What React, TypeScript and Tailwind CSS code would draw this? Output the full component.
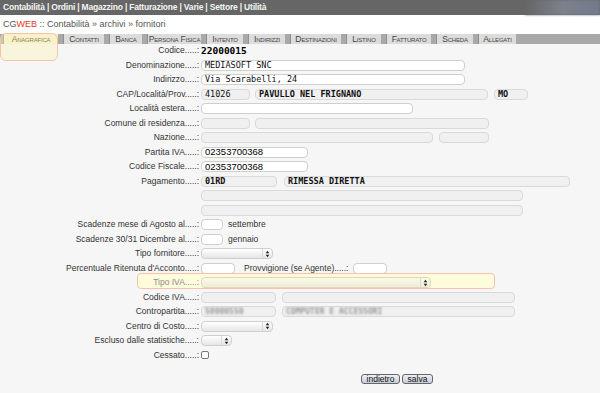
import type { ReactNode } from 'react';

const sans = "font-['Liberation_Sans',Arial,sans-serif]";
const mono = "font-['DejaVu_Sans_Mono',monospace]";

type Tab = { label: string; w: string; active?: boolean };

const tabs: Tab[] = [
  { label: 'Anagrafica', w: 'w-[55px]', active: true },
  { label: 'Contatti', w: 'w-[41px]' },
  { label: 'Banca', w: 'w-[33px]' },
  { label: 'Persona Fisica', w: 'w-[54px]' },
  { label: 'Intento', w: 'w-[37px]' },
  { label: 'Indirizzi', w: 'w-[37px]' },
  { label: 'Destinazioni', w: 'w-[51px]' },
  { label: 'Listino', w: 'w-[35px]' },
  { label: 'Fatturato', w: 'w-[45px]' },
  { label: 'Scheda', w: 'w-[37px]' },
  { label: 'Allegati', w: 'w-[38px]' },
];

function Row({
  label,
  children,
  muted,
}: {
  label: string;
  children?: ReactNode;
  muted?: boolean;
}) {
  return (
    <div className="flex h-[14.5px] items-center">
      <div
        className={`w-[199px] shrink-0 whitespace-nowrap text-right text-[8.5px] ${muted ? 'text-[#8a8a8a]' : 'text-[#333]'}`}
      >
        {label}
      </div>
      <div className="ml-[2px] flex items-center">{children}</div>
    </div>
  );
}

function Field({
  w,
  value,
  grey,
  bold,
  plain,
}: {
  w: string;
  value?: string;
  grey?: boolean;
  bold?: boolean;
  plain?: boolean;
}) {
  return (
    <div
      className={`${w} flex h-[11px] items-center overflow-hidden whitespace-nowrap rounded-[4px] border px-[3px] ${grey ? 'border-[#d9d9d9] bg-[#f0f0f0]' : 'border-[#cfcfcf] bg-white'} ${plain ? `${sans} text-[9.5px] text-black` : `${mono} text-[8.5px] text-[#111]`} ${bold ? 'font-bold' : ''}`}
    >
      {value}
    </div>
  );
}

function Arrows() {
  return (
    <svg width="5" height="8" viewBox="0 0 5 8">
      <path d="M2.5 0.8L4.3 3.2H0.7Z M2.5 7.2L4.3 4.8H0.7Z" fill="#222" />
    </svg>
  );
}

function Select({ w, tint }: { w: string; tint?: boolean }) {
  return (
    <div
      className={`${w} flex h-[11px] items-center justify-end rounded-[4px] border ${tint ? 'border-[#dcd8bc] bg-gradient-to-b from-[#fbfae9] to-[#efedd5]' : 'border-[#cfcfcf] bg-gradient-to-b from-white to-[#e6e6e6]'}`}
    >
      <div className="flex h-full w-[10px] items-center justify-center border-l border-[#dadada]">
        <Arrows />
      </div>
    </div>
  );
}

function Note({ children }: { children: ReactNode }) {
  return <span className="ml-[5px] text-[8.5px] text-[#333]">{children}</span>;
}

function TopMenu() {
  return (
    <div className="flex h-[15px] items-end bg-[#666666]">
      <div className="pb-[1px] pl-[3px] text-[8.5px] font-bold tracking-[-0.2px] text-[#f4f4f4]">
        Contabilità | Ordini | Magazzino | Fatturazione | Varie | Settore | Utilità
      </div>
      <div className="ml-auto h-full w-[75px] bg-gradient-to-r from-[#666666] via-[#7d818d] to-[#737a8a] blur-[1px]" />
    </div>
  );
}

function TabBar() {
  return (
    <div className="flex h-[10px] items-stretch gap-[5px] bg-[#a9a9a9] pl-[3px]">
      {tabs.map((t) => (
        <div
          key={t.label}
          className={`${t.w} flex items-center justify-center whitespace-nowrap border-l border-[#8f8f8f] text-[8.5px] tracking-[-0.2px] [font-variant:small-caps] ${t.active ? 'bg-[#f4f0cf] text-[#333]' : 'bg-[#dcdcdc] text-[#444]'}`}
        >
          {t.label}
        </div>
      ))}
    </div>
  );
}

export default function App() {
  return (
    <div className={`relative h-[393px] w-[600px] overflow-hidden bg-[#f6f6f6] ${sans}`}>
      <TopMenu />
      <div className="flex h-[19px] items-center bg-white pl-[3px] text-[9px] text-[#555]">
        <span>CG</span>
        <span className="text-[#e8352a]">WEB</span>
        <span>&nbsp;:: Contabilità » archivi » fornitori</span>
      </div>
      <TabBar />

      <div className="-mt-[0.5px] flex flex-col">
        <Row label="Codice.....:">
          <span className={`${mono} text-[9.5px] font-bold text-black`}>22000015</span>
        </Row>
        <Row label="Denominazione.....:">
          <Field w="w-[264px]" value="MEDIASOFT SNC" />
        </Row>
        <Row label="Indirizzo.....:">
          <Field w="w-[264px]" value="Via Scarabelli, 24" />
        </Row>
        <Row label="CAP/Località/Prov.....:">
          <Field w="w-[49px]" value="41026" grey />
          <div className="ml-[5px]">
            <Field w="w-[233px]" value="PAVULLO NEL FRIGNANO" grey bold />
          </div>
          <div className="ml-[6px]">
            <Field w="w-[34px]" value="MO" grey bold />
          </div>
        </Row>
        <Row label="Località estera.....:">
          <Field w="w-[212px]" />
        </Row>
        <Row label="Comune di residenza.....:">
          <Field w="w-[49px]" grey />
          <div className="ml-[5px]">
            <Field w="w-[234px]" grey />
          </div>
        </Row>
        <Row label="Nazione.....:">
          <Field w="w-[232px]" grey />
          <div className="ml-[6px]">
            <Field w="w-[50px]" grey />
          </div>
        </Row>
        <Row label="Partita IVA.....:">
          <Field w="w-[107px]" value="02353700368" plain />
        </Row>
        <Row label="Codice Fiscale.....:">
          <Field w="w-[107px]" value="02353700368" plain />
        </Row>
        <Row label="Pagamento.....:">
          <Field w="w-[76px]" value="01RD" grey bold />
          <div className="ml-[7px]">
            <Field w="w-[286px]" value="RIMESSA DIRETTA" grey bold />
          </div>
        </Row>
        <Row label="">
          <Field w="w-[322px]" grey />
        </Row>
        <Row label="">
          <Field w="w-[322px]" grey />
        </Row>
        <Row label="Scadenze mese di Agosto al.....:">
          <Field w="w-[22px]" />
          <Note>settembre</Note>
        </Row>
        <Row label="Scadenze 30/31 Dicembre al.....:">
          <Field w="w-[22px]" />
          <Note>gennaio</Note>
        </Row>
        <Row label="Tipo fornitore.....:">
          <Select w="w-[72px]" />
        </Row>
        <Row label="Percentuale Ritenuta d'Acconto.....:">
          <Field w="w-[34px]" />
          <span className="ml-[9px] text-[8.5px] text-[#333]">Provvigione (se Agente).....:</span>
          <div className="ml-[5px]">
            <Field w="w-[34px]" />
          </div>
        </Row>
        <div className="relative">
          <div className="pointer-events-none absolute left-[137px] top-[-2.5px] h-[16px] w-[358px] rounded-[4px] border border-[#f6c2ae] bg-[#fffcdc]" />
          <div className="relative">
            <Row label="Tipo IVA.....:" muted>
              <Select w="w-[230px]" tint />
            </Row>
          </div>
        </div>
        <Row label="Codice IVA.....:">
          <Field w="w-[75px]" grey />
          <div className="ml-[6px]">
            <Field w="w-[233px]" grey />
          </div>
        </Row>
        <Row label="Contropartita.....:">
          <div className="flex h-[11px] w-[75px] items-center overflow-hidden rounded-[4px] border border-[#d9d9d9] bg-[#f0f0f0] px-[3px]">
            <span className={`${mono} text-[8px] font-bold text-[#999] blur-[1.2px]`}>50000550</span>
          </div>
          <div className="ml-[6px] flex h-[11px] w-[233px] items-center overflow-hidden rounded-[4px] border border-[#d9d9d9] bg-[#f0f0f0] px-[3px]">
            <span className={`${mono} whitespace-nowrap text-[8px] font-bold text-[#999] blur-[1.2px]`}>
              COMPUTER E ACCESSORI
            </span>
          </div>
        </Row>
        <Row label="Centro di Costo.....:">
          <Select w="w-[72px]" />
        </Row>
        <Row label="Escluso dalle statistiche.....:">
          <Select w="w-[31px]" />
        </Row>
        <Row label="Cessato.....:">
          <div className="h-[8px] w-[8px] rounded-[2px] border border-[#777] bg-white" />
        </Row>

        <div className="ml-[361px] mt-[11px] flex gap-[2px]">
          <button className="h-[10px] w-[39px] rounded-[3px] border border-[#666] bg-gradient-to-b from-[#eef0f5] to-[#c7ccd8] text-[8.5px] leading-[8px] text-[#111]">
            indietro
          </button>
          <button className="h-[10px] w-[31px] rounded-[3px] border border-[#666] bg-gradient-to-b from-[#eef0f5] to-[#c7ccd8] text-[8.5px] leading-[8px] text-[#111]">
            salva
          </button>
        </div>
      </div>

      <div className="pointer-events-none absolute left-0 top-[33px] h-[28px] w-[58px] rounded-[6px] border border-[#f5c4a6] bg-[#fff6b8]/40" />
    </div>
  );
}
